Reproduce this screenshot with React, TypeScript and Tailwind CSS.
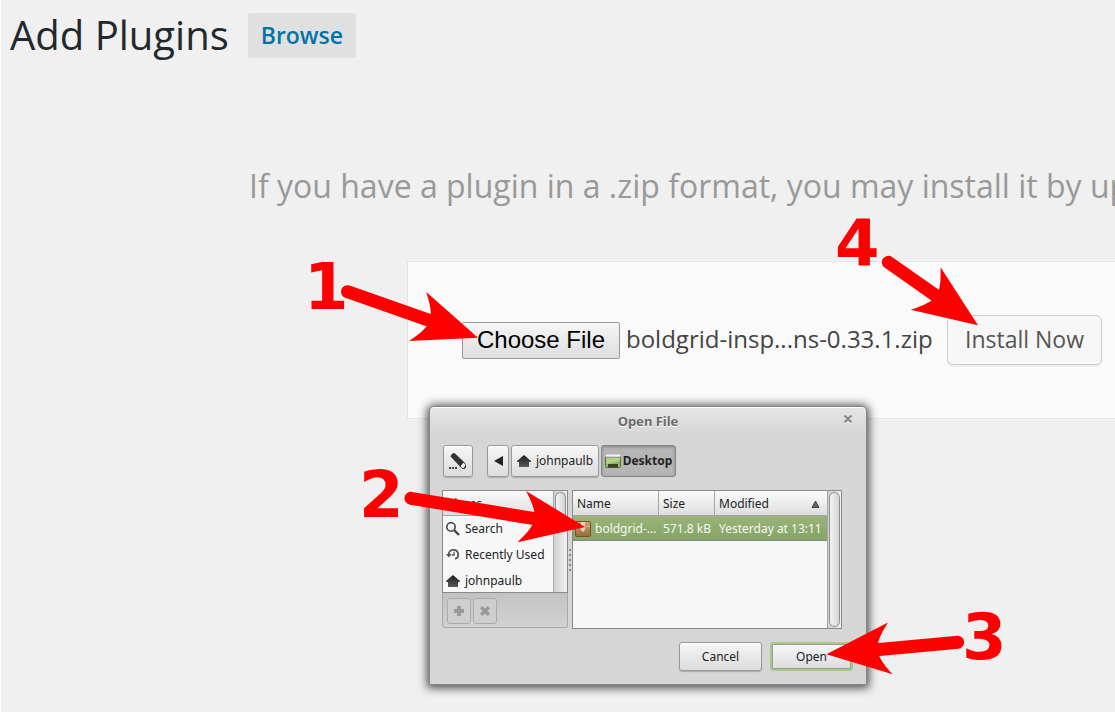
import { useRef, type ReactNode } from "react";

type ArrowProps = { x1: number; y1: number; x2: number; y2: number };

function Arrow({ x1, y1, x2, y2 }: ArrowProps) {
  const angle = (Math.atan2(y2 - y1, x2 - x1) * 180) / Math.PI;
  const length = Math.hypot(x2 - x1, y2 - y1);
  return (
    <g transform={`translate(${x2} ${y2}) rotate(${angle})`} fill="#f00" stroke="none">
      <line x1={-length} y1={0} x2={-45} y2={0} stroke="#f00" strokeWidth={13} strokeLinecap="round" />
      <path d="M0 0 L-64 -26 C-47 -3 -47 3 -64 26 Z" />
    </g>
  );
}

const steps = [
  { label: "1", x: 304, y: 309, arrow: { x1: 347.5, y1: 291.7, x2: 478, y2: 337.7 } },
  { label: "2", x: 359, y: 517, arrow: { x1: 411, y1: 498.3, x2: 585, y2: 527 } },
  { label: "3", x: 962, y: 659, arrow: { x1: 957.7, y1: 642.3, x2: 826.5, y2: 654.3 } },
  { label: "4", x: 835, y: 266, arrow: { x1: 888.3, y1: 262.3, x2: 978, y2: 325.3 } },
];

function Annotations() {
  return (
    <svg
      className="pointer-events-none absolute left-0 top-0 z-20"
      width="1115"
      height="712"
      viewBox="0 0 1115 712"
    >
      {steps.map((s) => (
        <g key={s.label}>
          <Arrow {...s.arrow} />
          <text
            x={s.x}
            y={s.y}
            className="fill-[#f00] font-['DejaVu_Sans',sans-serif] text-[64px] font-bold"
          >
            {s.label}
          </text>
        </g>
      ))}
    </svg>
  );
}

function HomeIcon() {
  return (
    <svg width="14" height="14" viewBox="0 0 14 14" className="shrink-0">
      <defs>
        <linearGradient id="home" x1="0" y1="0" x2="0" y2="1">
          <stop offset="0" stopColor="#1e1e1e" />
          <stop offset="1" stopColor="#5a5a5a" />
        </linearGradient>
      </defs>
      <path d="M7 1 L14 7 V8 H12 V13 H2 V8 H0 V7 Z" fill="url(#home)" />
    </svg>
  );
}

function PencilIcon() {
  return (
    <svg width="18" height="18" viewBox="0 0 18 18" className="shrink-0">
      <path d="M11 14 L14.5 10 L16.5 12.5 V15 Q16.3 16.5 14.8 16.5 L13 16.3 Z" fill="#f4f4f4" stroke="#444" strokeWidth="1" />
      <path d="M1.5 4.5 Q2.5 1 5.5 1 L15 10 L11 14.5 Z" fill="#333" />
      <path d="M14 16.5 L16.6 13.8 V15 Q16.3 16.5 14.8 16.5 Z" fill="#222" />
      <path d="M0 16 H2 M3 16 H5 M6 16 H8" stroke="#444" strokeWidth="1.8" />
    </svg>
  );
}

function DesktopIcon() {
  return (
    <svg width="16" height="14" viewBox="0 0 16 14" className="shrink-0">
      <rect x="0.5" y="0.5" width="15" height="13" rx="1" fill="#8fb368" stroke="#557235" />
      <rect x="0" y="0" width="16" height="3" rx="1" fill="#f2f2f2" stroke="#8a8a8a" strokeWidth="0.6" />
      <path d="M1 4 H15 V7 L1 10 Z" fill="#b0d086" />
      <rect x="3" y="10" width="10" height="3.5" fill="#34431f" />
    </svg>
  );
}

function SearchIcon() {
  return (
    <svg width="14" height="14" viewBox="0 0 14 14" className="shrink-0">
      <circle cx="5" cy="5" r="4.2" fill="none" stroke="#444" strokeWidth="1.6" />
      <path d="M8 8 L13 13" stroke="#444" strokeWidth="2.4" />
    </svg>
  );
}

function RecentIcon() {
  return (
    <svg width="14" height="14" viewBox="0 0 14 14" className="shrink-0">
      <path d="M2.8 6.5 A4.7 4.7 0 1 1 9 11" fill="none" stroke="#555" strokeWidth="1.8" />
      <path d="M0 6 H5.6 L2.8 9.5 Z" fill="#555" />
      <path d="M8 3.8 V7 H5.8" fill="none" stroke="#555" strokeWidth="1.3" />
    </svg>
  );
}

function PackageIcon() {
  return (
    <svg width="16" height="16" viewBox="0 0 16 16" className="shrink-0">
      <defs>
        <linearGradient id="pkg" x1="0" y1="0" x2="0" y2="1">
          <stop offset="0" stopColor="#cfa175" />
          <stop offset="1" stopColor="#9c6b3c" />
        </linearGradient>
      </defs>
      <rect x="0.5" y="0.5" width="15" height="15" rx="1.5" fill="url(#pkg)" stroke="#7c4f28" />
      <path d="M6 1 H10 V9 L8 11 L6 9 Z" fill="#e6d3bb" />
      <path d="M1 5.5 H15" stroke="#e0bf9b" strokeWidth="0.8" />
    </svg>
  );
}

const raised =
  "rounded-[3px] border border-[#9a9a9a] bg-linear-to-b from-[#f6f6f6] to-[#dcdcdc] shadow-[inset_0_1px_0_#fff,0_1px_1px_#0003]";

function ScrollBar({ clipped = false }: { clipped?: boolean }) {
  return (
    <div className="flex w-[14px] shrink-0 border-l border-[#a8a8a8] bg-linear-to-r from-[#cfcfcf] to-[#f2f2f2] p-px">
      <div
        className={
          clipped
            ? "h-6 flex-1 rounded-t-full border border-b-0 border-[#8e8e8e] bg-linear-to-r from-[#f4f4f4] to-[#d4d4d4]"
            : "flex-1 rounded-full border border-[#8e8e8e] bg-linear-to-r from-[#f4f4f4] to-[#d4d4d4]"
        }
      />
    </div>
  );
}

function Place({ icon, children }: { icon: ReactNode; children: ReactNode }) {
  return (
    <li className="flex h-[26px] items-center gap-[5px] pl-[3px]">
      {icon}
      <span className="whitespace-nowrap">{children}</span>
    </li>
  );
}

function OpenFileDialog() {
  const head =
    "h-[25px] border-b border-r border-[#a5a5a5] px-1 pt-[2px] text-left font-normal bg-linear-to-b from-[#fbfbfb] to-[#dedede]";
  return (
    <div
      role="dialog"
      aria-labelledby="dialog-title"
      className="absolute left-[429px] top-[406px] z-10 w-[438px] rounded-t-[5px] border border-[#858585] bg-[#d6d6d6] bg-linear-to-b from-[#e6e6e6] to-[#d6d6d6] to-10% pb-[13px] font-['Noto_Sans',sans-serif] text-[12px] leading-4 text-[#222] shadow-[inset_0_1px_0_#fff,0_1px_10px_2px_#000000b0]"
    >
      <div className="grid h-[38px] grid-cols-[1fr_auto_1fr] items-start px-3 pt-[6px]">
        <span />
        <h2 id="dialog-title" className="text-[13px] font-bold leading-4 text-[#6b6b6b] [text-shadow:0_1px_0_#fff]">
          Open File
        </h2>
        <button type="button" aria-label="Close" className="justify-self-end p-px">
          <svg width="10" height="10" viewBox="0 0 10 10">
            <path d="M1.5 2.5 L8.5 9.5 M8.5 2.5 L1.5 9.5" stroke="#fff" strokeWidth="2" />
            <path d="M1.5 1.5 L8.5 8.5 M8.5 1.5 L1.5 8.5" stroke="#888" strokeWidth="2.2" />
          </svg>
        </button>
      </div>

      <div className="flex h-8 gap-[2px] pl-[13px]">
        <button type="button" aria-label="Type a file name" className={`mr-3 flex w-[30px] items-center justify-center ${raised}`}>
          <PencilIcon />
        </button>
        <button type="button" aria-label="Back" className={`flex w-[22px] items-center justify-center ${raised}`}>
          <svg width="9" height="10" viewBox="0 0 9 10">
            <path d="M0 5 L9 0 V10 Z" fill="#222" />
          </svg>
        </button>
        <button type="button" className={`flex w-[88px] items-center justify-center gap-[5px] ${raised}`}>
          <HomeIcon />
          johnpaulb
        </button>
        <button
          type="button"
          className="flex w-[75px] items-center justify-center gap-[2px] rounded-[3px] border border-[#858585] bg-[#b5b5b5] font-bold shadow-[inset_0_1px_3px_#0004]"
        >
          <DesktopIcon />
          Desktop
        </button>
      </div>

      <div className="mt-[13px] flex h-[139px] pl-3 pr-6">
        <div className="flex w-[126px] flex-col">
          <div className="flex h-[103px] border border-[#8a8a8a] bg-[#f7f7f7]">
            <div className="min-w-0 flex-1">
              <h3 className="h-[25px] border-b border-[#a5a5a5] bg-linear-to-b from-[#fbfbfb] to-[#dedede] px-1 leading-[26px]">
                Places
              </h3>
              <ul>
                <Place icon={<SearchIcon />}>Search</Place>
                <Place icon={<RecentIcon />}>Recently Used</Place>
                <Place icon={<HomeIcon />}>johnpaulb</Place>
              </ul>
            </div>
            <ScrollBar clipped />
          </div>
          <div className="flex h-[35px] gap-[2px] rounded-b-[3px] border border-t-0 border-[#a8a8a8] bg-linear-to-b from-[#c2c2c2] to-[#d2d2d2] px-1 pt-[5px]">
            <button type="button" aria-label="Add bookmark" disabled className="flex h-[26px] w-6 items-center justify-center rounded-[3px] border border-[#aaa] bg-[#cecece]">
              <svg width="10" height="10" viewBox="0 0 10 10">
                <path d="M5 0 V10 M0 5 H10" stroke="#999" strokeWidth="4" />
              </svg>
            </button>
            <button type="button" aria-label="Remove bookmark" disabled className="flex h-[26px] w-6 items-center justify-center rounded-[3px] border border-[#aaa] bg-[#cecece]">
              <svg width="10" height="10" viewBox="0 0 10 10">
                <path d="M1.2 1.2 L8.8 8.8 M8.8 1.2 L1.2 8.8" stroke="#999" strokeWidth="3.4" />
              </svg>
            </button>
          </div>
        </div>

        <div className="flex w-1 flex-col items-center justify-center gap-[3px]">
          {[0, 1, 2, 3, 4].map((i) => (
            <span key={i} className="size-[2px] bg-[#8a8a8a]" />
          ))}
        </div>

        <div className="flex min-w-0 flex-1 border border-[#8a8a8a] bg-[#f7f7f7]">
          <div className="min-w-0 flex-1">
            <table className="w-full table-fixed border-separate border-spacing-0 whitespace-nowrap">
              <thead>
                <tr>
                  <th className={`w-[86px] ${head}`}>Name</th>
                  <th className={`w-[56px] ${head}`}>Size</th>
                  <th className={`${head} border-r-0`}>
                    <span className="flex items-center justify-between pr-[2px]">
                      Modified
                      <svg width="9" height="8" viewBox="0 0 9 8" className="mr-px">
                        <path d="M4.5 1 L8 7.5 H1 Z" fill="#666" stroke="#444" />
                      </svg>
                    </span>
                  </th>
                </tr>
              </thead>
              <tbody>
                <tr className="h-[25px] bg-linear-to-b from-[#98b47a] to-[#86a366] text-[#f6f8f2]">
                  <td className="border-b border-[#888] pl-[2px] pt-px">
                    <span className="flex items-center gap-1">
                      <PackageIcon />
                      boldgrid-...
                    </span>
                  </td>
                  <td className="border-b border-[#888] pl-1 pt-px">571.8 kB</td>
                  <td className="border-b border-[#888] pl-1 pt-px">Yesterday at 13:11</td>
                </tr>
              </tbody>
            </table>
          </div>
          <ScrollBar />
        </div>
      </div>

      <div className="mt-[13px] flex justify-end gap-2 pr-[13px]">
        <button type="button" className={`h-[29px] w-[83px] ${raised}`}>
          Cancel
        </button>
        <button
          type="button"
          className="h-[29px] w-[83px] rounded-[3px] border-2 border-[#a9c986] bg-linear-to-b from-[#f8f8f8] to-[#dcdcdc] shadow-[inset_0_0_0_1px_#9a9a9a]"
        >
          Open
        </button>
      </div>
    </div>
  );
}

export default function App() {
  const fileInput = useRef<HTMLInputElement>(null);
  return (
    <div className="relative min-h-screen overflow-hidden bg-[#f0f0f0] font-['Open_Sans',sans-serif]">
      <main className="min-h-screen border-l border-white">
        <header className="flex items-center gap-[19px] pl-[9px] pt-[7px]">
          <h1 className="text-[40px] leading-[56px] text-[#23282d]">Add Plugins</h1>
          <a
            href="#browse"
            className="rounded-[3px] bg-[#e0e0e0] px-[13px] text-[23px] font-semibold leading-[45px] text-[#0073aa]"
          >
            Browse
          </a>
        </header>

        <p className="mt-[101px] whitespace-nowrap pl-[248px] text-[32px] leading-[44px] text-[#999]">
          If you have a plugin in a .zip format, you may install it by uploading it here.
        </p>

        <form
          className="ml-[406px] mt-[53px] flex h-[158px] items-center border border-r-0 border-[#e5e5e5] bg-[#fafafa] pl-[54px]"
          onSubmit={(e) => e.preventDefault()}
        >
          <input ref={fileInput} type="file" aria-label="Plugin zip file" className="hidden" />
          <button
            type="button"
            onClick={() => fileInput.current?.click()}
            className="h-[37px] w-[158px] shrink-0 rounded-[2px] border border-[#999] bg-linear-to-b from-[#f6f6f6] to-[#dedede] font-['Liberation_Sans',sans-serif] text-[24px] leading-none text-black"
          >
            Choose File
          </button>
          <span className="w-[327px] whitespace-nowrap pb-[2px] pl-[6px] text-[24px] leading-9 text-[#444]">boldgrid-insp...ns-0.33.1.zip</span>
          <button
            type="submit"
            className="h-[50px] w-[155px] shrink-0 rounded-[6px] border border-[#ccc] bg-[#f7f7f7] pb-[2px] text-[23px] leading-9 text-[#555] shadow-[0_2px_0_#0000000d]"
          >
            Install Now
          </button>
        </form>
      </main>
      <OpenFileDialog />
      <Annotations />
    </div>
  );
}
